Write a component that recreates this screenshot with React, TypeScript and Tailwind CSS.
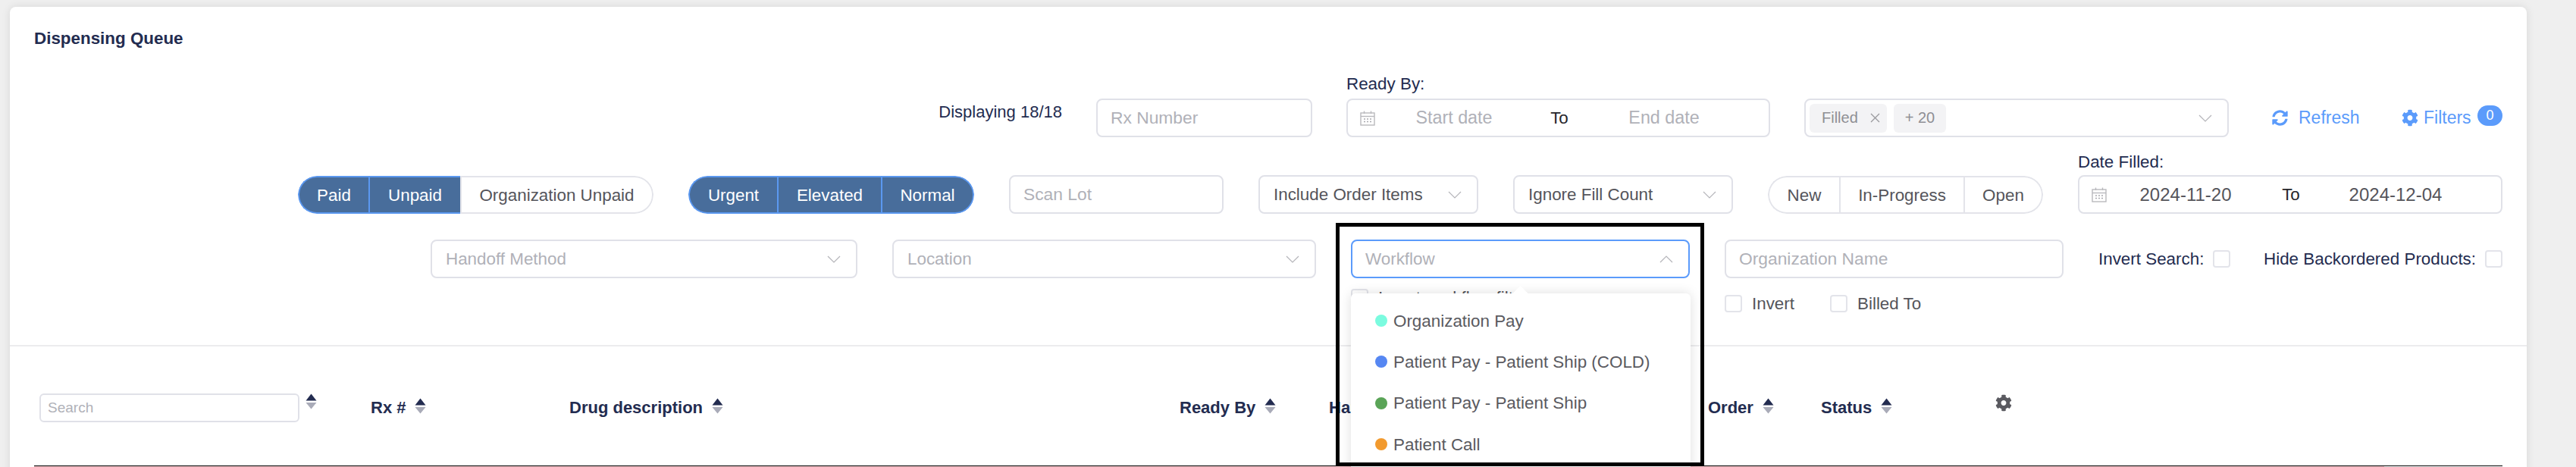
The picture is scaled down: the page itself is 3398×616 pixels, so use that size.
import { type FC, type ReactNode } from 'react';
import { FaCog, FaSyncAlt } from 'react-icons/fa';

const WORKFLOWS = [
  { name: 'Organization Pay', dot: 'bg-[#7bfbdf]' },
  { name: 'Patient Pay - Patient Ship (COLD)', dot: 'bg-[#5687f2]' },
  { name: 'Patient Pay - Patient Ship', dot: 'bg-[#5aa457]' },
  { name: 'Patient Call', dot: 'bg-[#f29a2e]' },
];

const Chevron: FC<{ up?: boolean }> = ({ up }) => (
  <svg width="18" height="10" viewBox="0 0 18 10" fill="none" className="shrink-0">
    <path d={up ? 'M1 9 L9 1 L17 9' : 'M1 1 L9 9 L17 1'} stroke="#b4b4b9" strokeWidth="1.2" />
  </svg>
);

const CalendarIcon = () => (
  <svg width="20" height="20" viewBox="0 0 20 20" fill="none" className="shrink-0">
    <rect x="1" y="3" width="18" height="16" stroke="#b9b9bd" strokeWidth="1.4" />
    <path d="M1 7.5H19" stroke="#b9b9bd" strokeWidth="1.4" />
    <path d="M5.5 0.5V4M14.5 0.5V4" stroke="#b9b9bd" strokeWidth="1.4" />
    <path d="M5 11H7M9 11H11M13 11H15M5 14.5H7M9 14.5H11M13 14.5H15" stroke="#a9a9ae" strokeWidth="1.6" />
  </svg>
);

const SortIcon = () => (
  <svg width="15" height="21" viewBox="0 0 15 21" className="shrink-0">
    <path d="M7.5 0.5 L14.5 9.5 H0.5 Z" fill="#232c50" />
    <path d="M0.5 12 H14.5 L7.5 20.5 Z" fill="#a9abb8" />
  </svg>
);

const Checkbox = () => (
  <span className="block w-[23px] h-[23px] shrink-0 rounded-[4px] border-2 border-[#e3e4ea] bg-white" />
);

const TextInput: FC<{ placeholder: string; className: string }> = ({ placeholder, className }) => (
  <div className={`h-[51px] flex items-center pl-[17px] rounded-lg border-2 border-[#e0e1e8] text-[22.8px] text-[#b0b1b8] ${className}`}>
    {placeholder}
  </div>
);

const SelectBox: FC<{ label: string; muted?: boolean; className: string }> = ({ label, muted, className }) => (
  <div className={`h-[51px] flex items-center justify-between pl-[18px] pr-[20px] rounded-lg border-2 border-[#e0e1e8] ${muted ? 'text-[#b0b1b8]' : 'text-[#55555b]'} ${className}`}>
    <span>{label}</span>
    <Chevron />
  </div>
);

const DateRange: FC<{ start: string; end: string; muted?: boolean }> = ({ start, end, muted }) => (
  <div className={`h-[51px] flex items-center pl-[16px] rounded-lg border-2 border-[#e0e1e8] ${muted ? 'text-[#b0b1b8] text-[23.3px]' : 'text-[#55555b] text-[24px]'}`}>
    <CalendarIcon />
    <span className="w-[208px] text-center">{start}</span>
    <span className="w-[70px] text-center text-[22.4px] text-[#26262b]">To</span>
    <span className="w-[206px] text-center">{end}</span>
  </div>
);

const PillGroup: FC<{ items: { label: string; width: string; on: boolean }[] }> = ({ items }) => (
  <div className="flex h-[50px] rounded-full overflow-hidden">
    {items.map((item, i) => (
      <div
        key={item.label}
        className={`flex items-center justify-center border-y-2 border-l-2 ${item.width} ${i === items.length - 1 ? 'border-r-2 rounded-r-full' : ''} ${i === 0 ? 'rounded-l-full' : ''} ${
          item.on ? 'bg-[#486d9b] text-white border-[#5b98f0]' : 'bg-white text-[#55555b] border-[#e3e4ea]'
        }`}
      >
        {item.label}
      </div>
    ))}
  </div>
);

const HeaderCell: FC<{ width: string; children: ReactNode }> = ({ width, children }) => (
  <div className={`${width} shrink-0 flex items-center gap-[12px] font-bold text-[22px] text-[#232c50]`}>
    {children}
    <span className="-mt-[4px]">
      <SortIcon />
    </span>
  </div>
);

export default function App() {
  return (
    <div className="w-[3398px] h-[616px] overflow-hidden bg-[#efefef] pl-[13px] pt-[9px] font-['Liberation_Sans',Arial,sans-serif] text-[22.4px] leading-[27px]">
      <div className="w-[3320px] h-[720px] rounded-lg bg-white shadow-[0_0_12px_rgba(0,0,0,0.1)] pt-[28px]">
        <h1 className="pl-[32px] font-bold text-[#232c50]">Dispensing Queue</h1>

        <div className="mt-[33px] pr-[32px] flex justify-end items-end gap-[45px]">
          <span className="mb-[20px] text-[22px] text-[#232c50]">Displaying 18/18</span>
          <TextInput placeholder="Rx Number" className="w-[285px]" />
          <div className="w-[559px]">
            <div className="h-[33px] text-[#232c50]">Ready By:</div>
            <DateRange start="Start date" end="End date" muted />
          </div>
          <div className="w-[560px] h-[51px] flex items-center justify-between pl-[5px] pr-[20px] rounded-lg border-2 border-[#e0e1e8] text-[20px]">
            <div className="flex gap-[9px] text-[#8f8f94]">
              <span className="w-[102px] h-[38px] pl-[16px] flex items-center gap-[16px] rounded-md bg-[#f3f3f5]">
                Filled
                <svg width="13" height="13" viewBox="0 0 13 13" fill="none">
                  <path d="M1 1L12 12M12 1L1 12" stroke="#9a9a9e" strokeWidth="1.3" />
                </svg>
              </span>
              <span className="w-[69px] h-[38px] flex items-center justify-center rounded-md bg-[#f3f3f5]">+ 20</span>
            </div>
            <Chevron />
          </div>
          <div className="ml-[12px] h-[51px] flex items-center gap-[56px] text-[23px] text-[#5b9bfb]">
            <span className="flex items-center gap-[14px]">
              <FaSyncAlt className="w-[21px] h-[21px]" />
              <span className="w-[80px]">Refresh</span>
            </span>
            <span className="flex items-center gap-[7px]">
              <FaCog className="w-[22px] h-[23px]" />
              <span className="w-[64px]">Filters</span>
              <span className="w-[33px] h-[27px] -mt-[7px] flex items-center justify-center rounded-full bg-[#5b9bfb] text-white text-[18px]">0</span>
            </span>
          </div>
        </div>

        <div className="mt-[19px] pr-[32px] flex justify-end items-end gap-[46px]">
          <PillGroup
            items={[
              { label: 'Paid', width: 'w-[93px]', on: true },
              { label: 'Unpaid', width: 'w-[121px]', on: true },
              { label: 'Organization Unpaid', width: 'w-[255px]', on: false },
            ]}
          />
          <PillGroup
            items={[
              { label: 'Urgent', width: 'w-[117px]', on: true },
              { label: 'Elevated', width: 'w-[137px]', on: true },
              { label: 'Normal', width: 'w-[123px]', on: true },
            ]}
          />
          <TextInput placeholder="Scan Lot" className="w-[283px]" />
          <SelectBox label="Include Order Items" className="w-[290px]" />
          <SelectBox label="Ignore Fill Count" className="w-[290px]" />
          <PillGroup
            items={[
              { label: 'New', width: 'w-[94px]', on: false },
              { label: 'In-Progress', width: 'w-[164px]', on: false },
              { label: 'Open', width: 'w-[105px]', on: false },
            ]}
          />
          <div className="w-[560px]">
            <div className="h-[31px] text-[#232c50]">Date Filled:</div>
            <DateRange start="2024-11-20" end="2024-12-04" />
          </div>
        </div>

        <div className="mt-[34px] pr-[32px] flex justify-end items-start gap-[46px]">
          <SelectBox label="Handoff Method" muted className="w-[563px]" />
          <SelectBox label="Location" muted className="w-[559px]" />
          <div className="relative w-[447px]">
            <div className="h-[51px] flex items-center justify-between pl-[17px] pr-[20px] rounded-lg border-2 border-[#5b9bfb] text-[#b0b1b8]">
              <span>Workflow</span>
              <Chevron up />
            </div>
            <div className="mt-[12px] flex items-center gap-[13px] text-[#55555b]">
              <Checkbox />
              Invert workflow filter
            </div>
            <div className="absolute z-10 left-0 top-[71px] w-[448px] h-[300px] rounded-md bg-white shadow-[0_0_16px_rgba(0,0,0,0.13)] pt-[9px] text-[#5a5a60]">
              <span className="absolute -top-[7px] left-[216px] w-[15px] h-[15px] rotate-45 bg-white" />
              {WORKFLOWS.map((flow) => (
                <div key={flow.name} className="relative h-[54.3px] pl-[32px] flex items-center gap-[8px]">
                  <span className={`w-[16px] h-[16px] rounded-full ${flow.dot}`} />
                  {flow.name}
                </div>
              ))}
            </div>
            <div className="absolute z-20 -left-[20px] -top-[22px] w-[486px] h-[321px] border-[5px] border-black pointer-events-none" />
          </div>
          <div className="w-[447px]">
            <TextInput placeholder="Organization Name" className="w-full" />
            <div className="mt-[20px] flex items-center text-[#55555b]">
              <Checkbox />
              <span className="ml-[13px] w-[103px]">Invert</span>
              <Checkbox />
              <span className="ml-[13px]">Billed To</span>
            </div>
          </div>
          <div className="h-[51px] flex items-center gap-[44px] text-[#232c50]">
            <span className="w-[174px] flex items-center justify-between">
              Invert Search:
              <Checkbox />
            </span>
            <span className="w-[315px] flex items-center justify-between">
              Hide Backordered Products:
              <Checkbox />
            </span>
          </div>
        </div>

        <div className="mt-[41px] h-[2px] bg-[#ececee]" />

        <div className="mx-[32px] h-[158px] pt-[3px] border-b border-black flex items-center">
          <div className="w-[444px] shrink-0 pl-[7px] flex items-start gap-[8px] mt-[1px]">
            <div className="w-[343px] h-[38px] pl-[9px] flex items-center rounded-md border-2 border-[#e0e1e8] text-[19px] text-[#b0b1b8]">
              Search
            </div>
            <SortIcon />
          </div>
          <HeaderCell width="w-[262px]">Rx #</HeaderCell>
          <HeaderCell width="w-[805px]">Drug description</HeaderCell>
          <HeaderCell width="w-[197px]">Ready By</HeaderCell>
          <HeaderCell width="w-[500px]">Handoff Method</HeaderCell>
          <HeaderCell width="w-[149px]">Order</HeaderCell>
          <HeaderCell width="w-[230px]">Status</HeaderCell>
          <FaCog className="w-[22px] h-[23px] -mt-[12px] text-[#5a5a60]" />
        </div>
        <div className="ml-[32px] w-[3100px] h-[8px] bg-[#f4c4c8]" />
      </div>
    </div>
  );
}
